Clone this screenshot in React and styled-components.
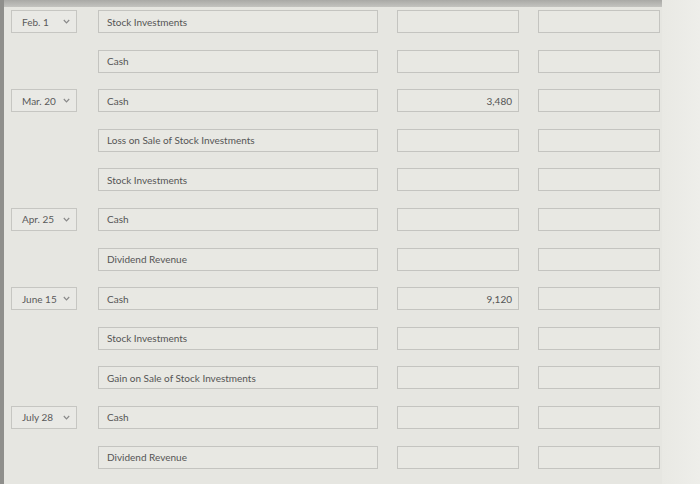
import styled, { createGlobalStyle } from "styled-components";

const GlobalStyle = createGlobalStyle`
  html, body {
    margin: 0;
    padding: 0;
    background: #e7e7e2;
  }
  body {
    font-family: Lato, "Open Sans", "Liberation Sans", sans-serif;
  }
`;

const Page = styled.div`
  display: flex;
  width: 700px;
  height: 484px;
  overflow: hidden;
  border-left: 4px solid #8f8f8c;
  box-sizing: border-box;
  background: #e6e6e1;
`;

const Main = styled.div`
  display: flex;
  flex-direction: column;
  flex: 1;
`;

const TopShade = styled.div`
  height: 7px;
  background: linear-gradient(#a9a9a6, #c3c3bf);
`;

const Side = styled.div`
  width: 38px;
  background: linear-gradient(90deg, #e9e9e4, #eeeeea);
`;

const Rows = styled.div`
  display: flex;
  flex-direction: column;
  gap: 16.6px;
  padding-top: 3px;
`;

const Row = styled.div`
  display: grid;
  grid-template-columns: 75px 280px 122px 122px;
  column-gap: 19px;
  height: 23px;
`;

const DateCell = styled.div`
  display: flex;
  align-items: center;
  padding-left: 7px;
`;

const DateSelect = styled.div`
  display: flex;
  align-items: center;
  justify-content: space-between;
  box-sizing: border-box;
  width: 66px;
  height: 23px;
  padding: 0 6px 0 10px;
  border: 1px solid #c6c6c2;
  background: #e9e9e5;
  color: #5a5a5a;
  font-size: 10px;
`;

const Chevron = styled.svg`
  width: 7px;
  height: 5px;
  stroke: #8a8a8a;
  fill: none;
  stroke-width: 1.2;
`;

const Field = styled.div`
  display: flex;
  align-items: center;
  justify-content: ${(p) => (p.$right ? "flex-end" : "flex-start")};
  box-sizing: border-box;
  height: 23px;
  padding: 0 ${(p) => (p.$right ? "6px" : "8px")};
  border: 1px solid #c4c4c0;
  background: #e8e8e3;
  color: #555;
  font-size: 10px;
  white-space: nowrap;
`;

const entries = [
  { date: "Feb. 1", account: "Stock Investments" },
  { account: "Cash" },
  { date: "Mar. 20", account: "Cash", debit: "3,480" },
  { account: "Loss on Sale of Stock Investments" },
  { account: "Stock Investments" },
  { date: "Apr. 25", account: "Cash" },
  { account: "Dividend Revenue" },
  { date: "June 15", account: "Cash", debit: "9,120" },
  { account: "Stock Investments" },
  { account: "Gain on Sale of Stock Investments" },
  { date: "July 28", account: "Cash" },
  { account: "Dividend Revenue" },
];

export default function App() {
  return (
    <>
      <GlobalStyle />
      <Page>
        <Main>
          <TopShade />
          <Rows>
            {entries.map((e, i) => (
              <Row key={i}>
                <DateCell>
                  {e.date && (
                    <DateSelect>
                      <span>{e.date}</span>
                      <Chevron viewBox="0 0 7 5">
                        <path d="M0.8 1 L3.5 3.8 L6.2 1" />
                      </Chevron>
                    </DateSelect>
                  )}
                </DateCell>
                <Field>{e.account}</Field>
                <Field $right>{e.debit}</Field>
                <Field $right>{e.credit}</Field>
              </Row>
            ))}
          </Rows>
        </Main>
        <Side />
      </Page>
    </>
  );
}
